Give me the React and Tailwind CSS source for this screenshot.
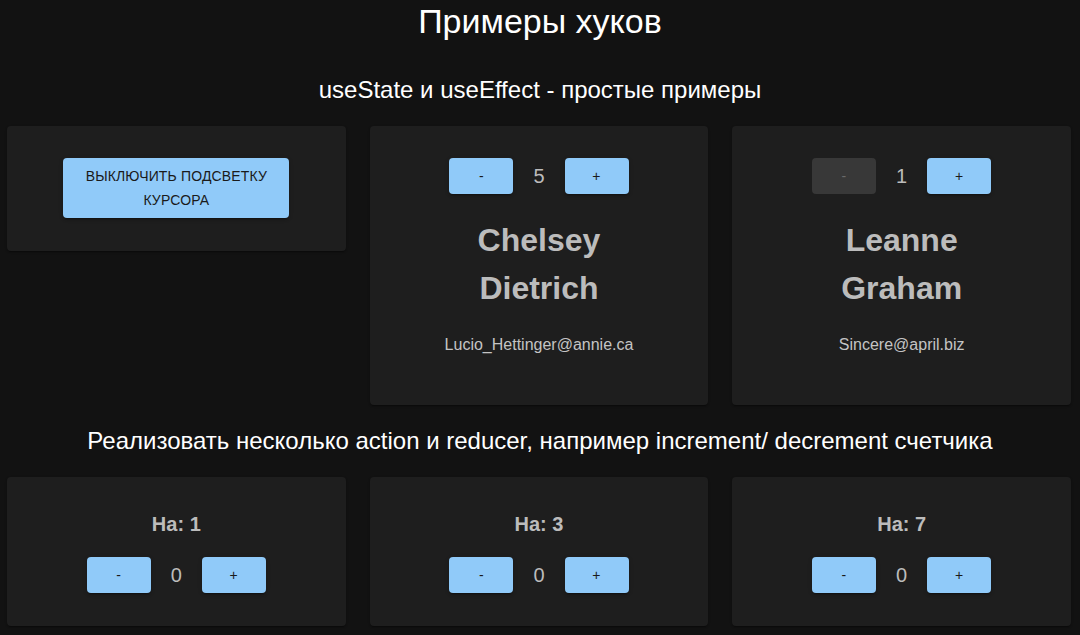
import React, { useState } from 'react';

const font = { fontFamily: '"Liberation Sans", Arial, sans-serif' };

const Btn = ({ children, disabled, onClick, className = '' }) => (
  <button
    type="button"
    disabled={disabled}
    onClick={onClick}
    className={`min-w-[64px] h-9 px-4 rounded text-sm leading-6 tracking-[0.4px] ${
      disabled
        ? 'bg-[#383838] text-[#6a6a6a]'
        : 'bg-[#90caf9] text-[#1a1a1a] shadow-[0_3px_1px_-2px_rgba(0,0,0,0.2),0_2px_2px_0_rgba(0,0,0,0.14),0_1px_5px_0_rgba(0,0,0,0.12)]'
    } ${className}`}
  >
    {children}
  </button>
);

const Counter = ({ value, min, onDec, onInc }) => (
  <div className="flex items-center justify-center gap-5">
    <Btn disabled={min !== undefined && value <= min} onClick={onDec}>-</Btn>
    <span className="text-[20px] leading-8 text-[#bcbcbc]">{value}</span>
    <Btn onClick={onInc}>+</Btn>
  </div>
);

const Card = ({ children, className = '' }) => (
  <div className={`bg-[#1e1e1e] rounded shadow-[0_2px_1px_-1px_rgba(0,0,0,0.2),0_1px_1px_0_rgba(0,0,0,0.14),0_1px_3px_0_rgba(0,0,0,0.12)] ${className}`}>
    {children}
  </div>
);

const UserCard = ({ start, name, email }) => {
  const [n, setN] = useState(start);
  return (
    <Card className="pt-8 pb-12 flex flex-col items-center">
      <Counter value={n} min={1} onDec={() => setN(n - 1)} onInc={() => setN(n + 1)} />
      <div className="mt-[22px] w-[200px] text-center text-[32px] leading-[48px] font-bold text-[#bcbcbc]">
        {name}
      </div>
      <div className="mt-[21px] text-base leading-6 text-[#c4c4c4]">{email}</div>
    </Card>
  );
};

const StepCard = ({ step }) => {
  const [n, setN] = useState(0);
  return (
    <Card className="pt-[31px] pb-[33px] flex flex-col items-center">
      <div className="text-[20px] leading-8 font-bold text-[#bcbcbc]">На: {step}</div>
      <div className="mt-[17px]">
        <Counter value={n} onDec={() => setN(n - step)} onInc={() => setN(n + step)} />
      </div>
    </Card>
  );
};

export default function App() {
  const [highlight, setHighlight] = useState(true);

  return (
    <div className="min-h-screen bg-[#121212] text-white" style={font}>
      <h1 className="text-center text-[34px] leading-[42px]">Примеры хуков</h1>

      <h2 className="mt-8 mb-5 text-center text-2xl leading-8">useState и useEffect - простые примеры</h2>

      <div className="grid grid-cols-3 gap-6 items-start pl-[7px] pr-[9px]">
        <Card className="pt-8 pb-[33px] flex justify-center">
          <button
            type="button"
            onClick={() => setHighlight(!highlight)}
            className="w-[226px] px-4 py-1.5 rounded bg-[#90caf9] text-[#1a1a1a] text-sm leading-6 tracking-[0.15px] uppercase shadow-[0_3px_1px_-2px_rgba(0,0,0,0.2),0_2px_2px_0_rgba(0,0,0,0.14),0_1px_5px_0_rgba(0,0,0,0.12)]"
          >
            {highlight ? 'Выключить подсветку курсора' : 'Включить подсветку курсора'}
          </button>
        </Card>
        <UserCard start={5} name="Chelsey Dietrich" email="Lucio_Hettinger@annie.ca" />
        <UserCard start={1} name="Leanne Graham" email="Sincere@april.biz" />
      </div>

      <h2 className="mt-5 mb-5 text-center text-2xl leading-8">
        Реализовать несколько action и reducer, например increment/ decrement счетчика
      </h2>

      <div className="grid grid-cols-3 gap-6 items-start pl-[7px] pr-[9px] pb-2">
        <StepCard step={1} />
        <StepCard step={3} />
        <StepCard step={7} />
      </div>
    </div>
  );
}
